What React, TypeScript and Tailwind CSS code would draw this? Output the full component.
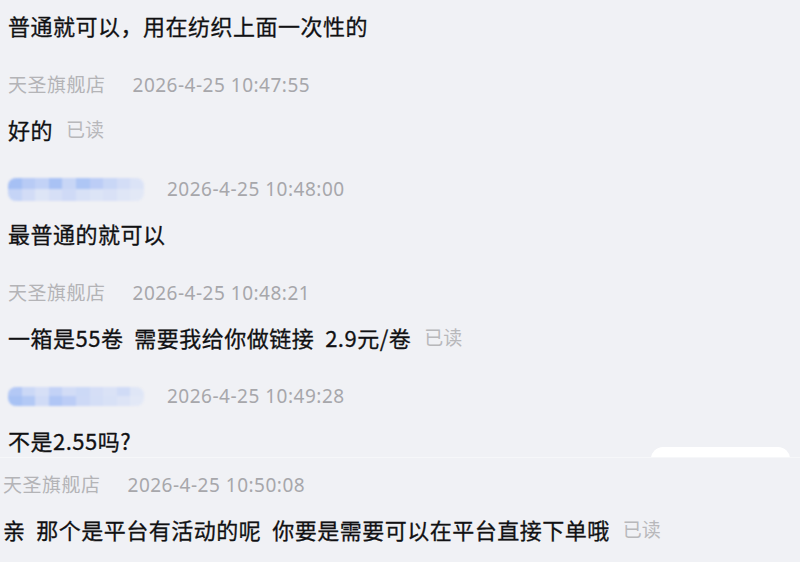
const FONT = { fontFamily: '"Noto Sans", "Noto Sans CJK SC", sans-serif' };
const CJK = { fontFamily: '"Noto Sans CJK SC", "Noto Sans", sans-serif' };

type Meta = { kind: "shop" | "buyer"; time: string };

const SHOP = "天圣旗舰店";

// blurred buyer nickname, drawn as a pixelated blue strip
const cellsA = [
  ["#a6c0f4", "#b8cbf5", "#c2d2f6", "#a9c2f4", "#c8d6f6", "#aec6f5", "#bccdf6", "#c9d7f6", "#d3ddf6", "#dbe3f6"],
  ["#c5d4f6", "#d2dcf6", "#dde5f6", "#d6dff6", "#cfdaf6", "#d8e1f6", "#dce4f6", "#d9e1f6", "#dfe6f6", "#e2e8f6"],
];
const cellsB = [
  ["#b3c8f5", "#cbd8f6", "#d6dff6", "#c3d2f6", "#d2dcf6", "#ccd9f6", "#d5def6", "#dae2f6", "#d0dbf6", "#dfe6f6"],
  ["#a8c2f4", "#b3c9f5", "#d0dbf6", "#b0c6f5", "#bccdf6", "#cdd9f6", "#d4def6", "#d8e1f6", "#dde4f6", "#e2e8f6"],
];

function BlurName({ cells, h }: { cells: string[][]; h: string }) {
  return (
    <div className={`w-[136px] ${h} rounded-[8px] overflow-hidden flex flex-col blur-[1px]`}>
      {cells.map((row, i) => (
        <div key={i} className="flex flex-1">
          {row.map((c, j) => (
            <div key={j} className="flex-1" style={{ background: c }} />
          ))}
        </div>
      ))}
    </div>
  );
}

function MetaRow({ meta, blur }: { meta: Meta; blur?: string[][] }) {
  return (
    <div className="h-[40px] flex items-center text-[19px] text-[#a7a7ab]">
      {meta.kind === "shop" ? (
        <span className="tracking-[0.5px] text-[#b4b4b7]">{SHOP}</span>
      ) : (
        <BlurName cells={blur ?? cellsA} h={blur === cellsB ? "h-[19px]" : "h-[23px]"} />
      )}
      <span className={`tracking-[0.5px] ${meta.kind === "shop" ? "ml-[27px]" : "ml-[23px]"}`}>
        {meta.time}
      </span>
    </div>
  );
}

function MsgRow({ text, read }: { text: string; read?: boolean }) {
  return (
    <div className="h-[48px] flex items-center whitespace-pre" style={CJK}>
      <span className="text-[22px] tracking-[0.5px] text-[#111113] [-webkit-text-stroke:0.3px_#111113]">
        {text}
      </span>
      {read && <span className="ml-[13px] text-[19px] text-[#b8b8bb]">已读</span>}
    </div>
  );
}

export default function App() {
  return (
    <div className="w-[800px] h-[562px] bg-[#f0f1f5] overflow-hidden" style={FONT}>
      {/* first capture */}
      <div className="relative h-[457px] overflow-hidden pl-[8px] pt-[1px]">
        <MsgRow text="普通就可以，用在纺织上面一次性的" />
        <div className="mt-[16px]">
          <MetaRow meta={{ kind: "shop", time: "2026-4-25 10:47:55" }} />
          <MsgRow text="好的" read />
        </div>
        <div className="mt-[16px]">
          <MetaRow meta={{ kind: "buyer", time: "2026-4-25 10:48:00" }} blur={cellsA} />
          <MsgRow text="最普通的就可以" />
        </div>
        <div className="mt-[16px]">
          <MetaRow meta={{ kind: "shop", time: "2026-4-25 10:48:21" }} />
          <MsgRow text="一箱是55卷  需要我给你做链接  2.9元/卷" read />
        </div>
        <div className="mt-[15px]">
          <MetaRow meta={{ kind: "buyer", time: "2026-4-25 10:49:28" }} blur={cellsB} />
          <MsgRow text="不是2.55吗?" />
        </div>
        {/* clipped white button peeking at the bottom right */}
        <div className="absolute top-[447px] right-[10px] w-[139px] h-[30px] bg-white rounded-[12px]" />
      </div>

      {/* second capture */}
      <div className="h-[105px] border-t border-[#f6f7f9] pl-[3px] pt-[7px]">
        <MetaRow meta={{ kind: "shop", time: "2026-4-25 10:50:08" }} />
        <MsgRow text="亲  那个是平台有活动的呢  你要是需要可以在平台直接下单哦" read />
      </div>
    </div>
  );
}
